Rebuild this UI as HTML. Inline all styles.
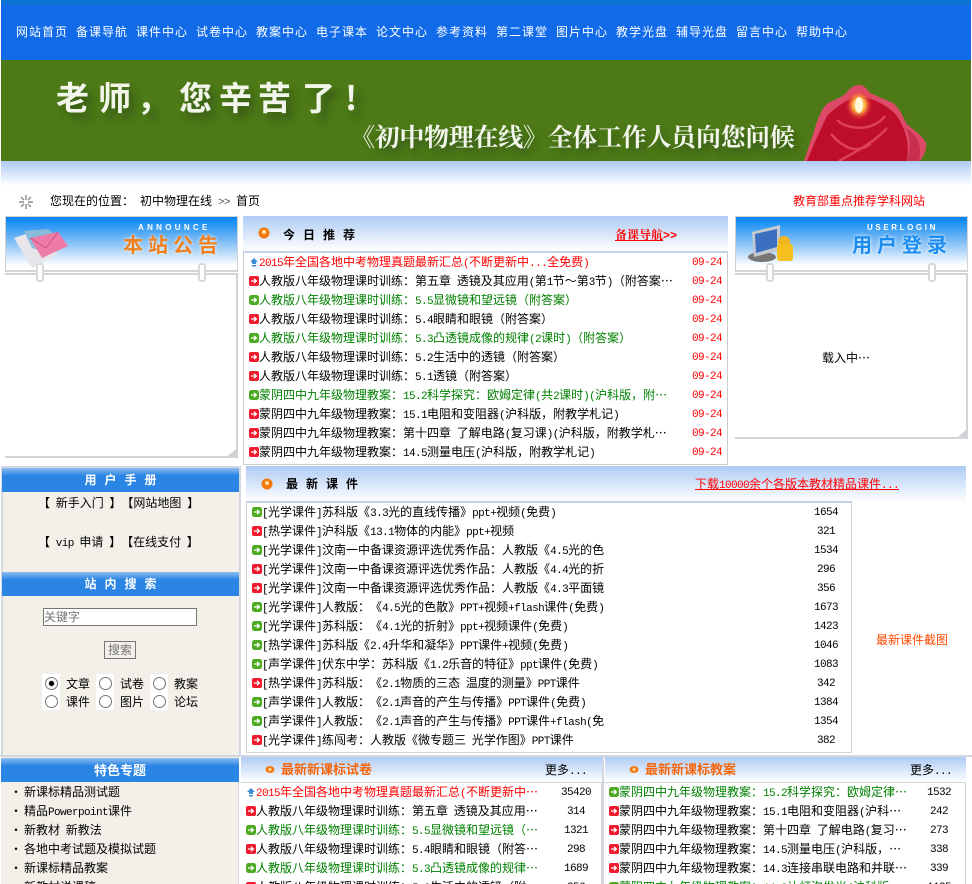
<!DOCTYPE html>
<html lang="zh"><head><meta charset="utf-8"><title>初中物理在线</title>
<style>
*{box-sizing:border-box}
html{margin:0;padding:0;background:#fff;overflow:hidden;width:972px;height:884px}
body{margin:0;padding:0;background:#fff;width:972px;height:884px;overflow:hidden;position:relative;font:12px/19px "WenQuanYi Zen Hei","Noto Sans CJK SC",sans-serif;word-spacing:3px;color:#000;text-spacing-trim:space-all}
tt{font:11px/1 "Liberation Mono",monospace;letter-spacing:-.6px;word-spacing:0}
.a{position:absolute;white-space:nowrap}
.nav{left:16px;top:22px;color:#fff;display:flex;letter-spacing:1px}
.nav span{display:block;width:60px}
.grad{background:linear-gradient(#aecbf4,#fff)}
.blue{background:linear-gradient(#8fbdf0 0,#2a85e4 32%,#2a85e4 100%);color:#fff;font-weight:bold;text-align:center;line-height:24px;height:24px}
.list{margin:0;padding:0;list-style:none}
.list li{height:19px;line-height:19px;white-space:nowrap;position:relative}
.list svg{width:10px;height:10px;display:inline-block;vertical-align:-1px;margin-right:0}
.g{color:#008000}.r{color:#f00}
.n{position:absolute;text-align:center;top:2px;width:60px;left:544px;color:#000;font:11px/19px "Liberation Mono",monospace;letter-spacing:-.6px}
.m{left:305px;width:50px}
.dt{position:absolute;left:443px;top:2px;color:#f00;font:11px/19px "Liberation Mono",monospace;letter-spacing:-.6px}
.hdbx{background:linear-gradient(#0284f3,#7cbcf5 45%,#fff 92%);border:1px solid #d4d4d4;border-bottom:2px solid #d4d4d4}
.ring{position:absolute;width:8px;height:19px;border:2px solid #d8d8d8;border-radius:3px;background:#fff}
.dot{position:absolute;width:13px;height:13px;border:1px solid #767676;border-radius:50%;background:#fff}
.ttl{font-weight:bold;letter-spacing:8px}
.fold{position:absolute;width:8px;height:7px;background:#cfcfd6;clip-path:polygon(100% 0,0 100%,100% 100%)}
.sm{color:#fff;font:bold 8px/9px "Liberation Sans",sans-serif;position:absolute;white-space:nowrap}
.bu{display:inline-block;width:14px}
</style></head><body>
<svg width="0" height="0" style="position:absolute"><defs>
<symbol id="ir" viewBox="0 0 10 10"><rect width="10" height="10" rx="2" fill="#ee1c2e"/><path d="M2 5h5M5 2.800 7.400 5 5 7.200" stroke="#fff" stroke-width="1.300" fill="none"/></symbol>
<symbol id="ig" viewBox="0 0 10 10"><rect width="10" height="10" rx="2.500" fill="#4dab23"/><path d="M2 5h5M5 2.800 7.400 5 5 7.200" stroke="#fff" stroke-width="1.300" fill="none"/></symbol>
<symbol id="iu" viewBox="0 0 10 10"><path d="M5 1 9 5H7V7H3V5H1ZM3 8H7V9.500H3Z" fill="#3e8ed8"/></symbol>
</defs></svg>

<div class="a" style="left:1px;top:0;width:970px;height:60px;background:#116be9"></div>
<div class="a" style="left:1px;top:0;width:970px;height:5px;background:#0d72d6"></div>
<div class="a nav"><span>网站首页</span><span>备课导航</span><span>课件中心</span><span>试卷中心</span><span>教案中心</span><span>电子课本</span><span>论文中心</span><span>参考资料</span><span>第二课堂</span><span>图片中心</span><span>教学光盘</span><span>辅导光盘</span><span>留言中心</span><span>帮助中心</span></div>

<svg class="a" style="left:1px;top:60px" width="970" height="101" viewBox="0 0 970 101">
<defs><filter id="b" x="-20%" y="-50%" width="140%" height="200%"><feGaussianBlur stdDeviation="4"/></filter><radialGradient id="fl"><stop offset="0" stop-color="#fff6c8"/><stop offset=".45" stop-color="#ffb040"/><stop offset="1" stop-color="#e01030" stop-opacity="0"/></radialGradient></defs>
<rect width="970" height="101" fill="#4d7a17"/>
<g font-family="'Noto Sans CJK SC',sans-serif" font-size="33" font-weight="bold" fill="#2e4f12" filter="url(#b)" opacity=".8"><text x="61 103 142 184 224 263 307 350" y="57">老师&#xFF0C;您辛苦了!</text></g>
<text x="55 97 136 178 218 257 301 344" y="50" font-family="'Noto Sans CJK SC',sans-serif" font-size="33" font-weight="bold" fill="#f2f6ea">老师&#xFF0C;您辛苦了!</text>
<g font-family="'Noto Serif CJK SC',serif" font-size="25" font-weight="bold"><text x="353" y="92" textLength="445" fill="#2e4f12" filter="url(#b)" opacity=".85">《初中物理在线》全体工作人员向您问候</text>
<text x="349" y="86" textLength="445" fill="#f4f6ee">《初中物理在线》全体工作人员向您问候</text></g>
<path d="M803 101C806 92 809 82 812 75 816 60 821 46 829 42 838 38 843 36 846 32 850 27 854 25 858 25 863 25 866 29 869 33 876 36 885 40 892 43 898 48 902 56 905 63 912 70 921 75 925 83 926 90 922 97 919 101Z" fill="#dd4a68"/>
<path d="M806 101C812 86 820 68 826 56 836 46 848 38 858 36 870 38 886 44 896 56 904 68 910 86 905 101Z" fill="#bf0d2c"/>
<path d="M905 101C910 90 910 78 905 68 914 74 922 82 918 101Z" fill="#c9304f"/>
<path d="M838 101C850 94 872 84 886 68M830 74C846 92 858 92 870 84M836 60C846 70 872 72 884 56" stroke="#de3f5a" stroke-width="2.500" fill="none"/>
<ellipse cx="858" cy="45" rx="14" ry="16" fill="url(#fl)"/><ellipse cx="858" cy="45" rx="4" ry="8" fill="#fff8d8"/>
</svg>
<div class="a grad" style="left:1px;top:161px;width:970px;height:25px"></div>

<svg class="a" style="left:18px;top:194px" width="16" height="16" viewBox="0 0 16 16"><path d="M8 1v5M8 10v5M1 8h5M10 8h5M3 3l3 3M10 10l3 3M13 3l-3 3M6 10l-3 3" stroke="#8a8a90" stroke-width="1.400"/></svg>
<div class="a" style="left:50px;top:191px">您现在的位置&#xFF1A;</div>
<div class="a" style="left:140px;top:191px">初中物理在线<tt style="color:#555"> &gt;&gt; </tt>首页</div>
<div class="a r" style="left:793px;top:191px">教育部重点推荐学科网站</div>

<!-- announce box -->
<div class="a hdbx" style="left:5px;top:216px;width:233px;height:56px"></div>
<svg class="a" style="left:12px;top:226px" width="58" height="42" viewBox="0 0 58 42"><path d="M2 12 22 5 46 28 20 42Z" fill="#e6e6ea"/><path d="M12 5 36 3 54 18 34 26 20 22Z" fill="#88bbdc"/><path d="M18 12 46 6 56 20 30 32Z" fill="#ee7aa8"/><path d="M18 12 34 22 46 6" stroke="#c84f85" fill="none"/></svg>
<div class="sm" style="left:138px;top:223px;letter-spacing:3.300px">ANNOUNCE</div>
<div class="a" style="left:123px;top:232px;color:#ee8020;font-size:20px;font-weight:bold;line-height:24px;letter-spacing:5px;text-shadow:0 0 3px #fff">本站公告</div>
<div class="a" style="left:5px;top:273px;width:233px;height:185px;border-top:2px solid #d4d4d4;border-right:2px solid #d4d4d4;border-bottom:2px solid #d4d4dc"></div>
<div class="fold" style="left:228px;top:449px"></div>
<div class="ring" style="left:36px;top:263px"></div><div class="ring" style="left:198px;top:263px"></div>

<!-- today -->
<div class="a grad" style="left:243px;top:216px;width:485px;height:35px"></div>
<svg class="a" style="left:258px;top:227px" width="12" height="12"><circle cx="6" cy="6" r="5.500" fill="#f47a10"/><circle cx="6" cy="5" r="2" fill="#ffe0a0"/></svg>
<div class="a ttl" style="left:283px;top:225px">今日推荐</div>
<div class="a" style="left:615px;top:225px;color:#f00;font-weight:bold;font-family:'Noto Serif CJK SC',serif"><u>备课导航</u><span style="font:bold 12px 'Liberation Sans',sans-serif">&gt;&gt;</span></div>
<div class="a" style="left:243px;top:251px;width:485px;height:214px;border:1px solid #ccc;border-top:2px solid #c3d4ea"></div>
<ul class="a list" style="left:249px;top:252px;width:475px">
<li class="r"><svg><use href="#iu"/></svg><tt>2015</tt>年全国各地中考物理真题最新汇总<tt>(</tt>不断更新中<tt>...</tt>全免费<tt>)</tt><span class="dt">09-24</span></li>
<li><svg><use href="#ir"/></svg>人教版八年级物理课时训练&#xFF1A;第五章 透镜及其应用<tt>(</tt>第<tt>1</tt>节&#xFF5E;第<tt>3</tt>节<tt>)</tt>&#xFF08;附答案…<span class="dt">09-24</span></li>
<li class="g"><svg><use href="#ig"/></svg>人教版八年级物理课时训练&#xFF1A;<tt>5.5</tt>显微镜和望远镜&#xFF08;附答案&#xFF09;<span class="dt">09-24</span></li>
<li><svg><use href="#ir"/></svg>人教版八年级物理课时训练&#xFF1A;<tt>5.4</tt>眼睛和眼镜&#xFF08;附答案&#xFF09;<span class="dt">09-24</span></li>
<li class="g"><svg><use href="#ig"/></svg>人教版八年级物理课时训练&#xFF1A;<tt>5.3</tt>凸透镜成像的规律<tt>(2</tt>课时<tt>)</tt>&#xFF08;附答案&#xFF09;<span class="dt">09-24</span></li>
<li><svg><use href="#ir"/></svg>人教版八年级物理课时训练&#xFF1A;<tt>5.2</tt>生活中的透镜&#xFF08;附答案&#xFF09;<span class="dt">09-24</span></li>
<li><svg><use href="#ir"/></svg>人教版八年级物理课时训练&#xFF1A;<tt>5.1</tt>透镜&#xFF08;附答案&#xFF09;<span class="dt">09-24</span></li>
<li class="g"><svg><use href="#ig"/></svg>蒙阴四中九年级物理教案&#xFF1A;<tt>15.2</tt>科学探究&#xFF1A;欧姆定律<tt>(</tt>共<tt>2</tt>课时<tt>)(</tt>沪科版&#xFF0C;附…<span class="dt">09-24</span></li>
<li><svg><use href="#ir"/></svg>蒙阴四中九年级物理教案&#xFF1A;<tt>15.1</tt>电阻和变阻器<tt>(</tt>沪科版&#xFF0C;附教学札记<tt>)</tt><span class="dt">09-24</span></li>
<li><svg><use href="#ir"/></svg>蒙阴四中九年级物理教案&#xFF1A;第十四章 了解电路<tt>(</tt>复习课<tt>)(</tt>沪科版&#xFF0C;附教学札…<span class="dt">09-24</span></li>
<li><svg><use href="#ir"/></svg>蒙阴四中九年级物理教案&#xFF1A;<tt>14.5</tt>测量电压<tt>(</tt>沪科版&#xFF0C;附教学札记<tt>)</tt><span class="dt">09-24</span></li>
</ul>

<!-- login box -->
<div class="a hdbx" style="left:735px;top:216px;width:233px;height:56px"></div>
<svg class="a" style="left:748px;top:224px" width="48" height="44" viewBox="0 0 48 44"><ellipse cx="14" cy="33" rx="14" ry="5" fill="#777"/><path d="M4 8 32 1V26L6 33Z" fill="#c5c9cf"/><path d="M7 10 29 5V23L8 29Z" fill="#3b6fc0"/><circle cx="36" cy="18" r="6" fill="#f4b61e"/><rect x="29" y="20" width="16" height="17" rx="3" fill="#f7bf1e"/></svg>
<div class="sm" style="left:867px;top:223px;letter-spacing:2.600px">USERLOGIN</div>
<div class="a" style="left:852px;top:232px;color:#1a8cf0;font-size:20px;font-weight:bold;line-height:24px;letter-spacing:5px;text-shadow:0 0 3px #fff">用户登录</div>
<div class="a" style="left:735px;top:273px;width:233px;height:166px;border-top:2px solid #d4d4d4;border-right:2px solid #d4d4d4;border-bottom:2px solid #d4d4dc"></div>
<div class="fold" style="left:958px;top:430px"></div>
<div class="ring" style="left:766px;top:263px"></div><div class="ring" style="left:928px;top:263px"></div>
<div class="a" style="left:822px;top:348px">载入中…</div>

<!-- left column -->
<div class="a" style="left:1px;top:466px;width:240px;height:291px;background:#f3f0e9;border:2px solid #d4d7df;border-bottom:0"></div>
<div class="a blue ttl" style="left:2px;top:468px;width:237px;padding-left:8px">用户手册</div>
<div class="a" style="left:38px;top:493px">【 新手入门 】【网站地图 】</div>
<div class="a" style="left:38px;top:532px">【 <tt>vip</tt> 申请 】【在线支付 】</div>
<div class="a blue ttl" style="left:2px;top:572px;width:237px;padding-left:8px">站内搜索</div>
<div class="a" style="left:43px;top:608px;width:154px;height:18px;background:#fff;border:1px solid #767676;color:#757575;line-height:16px">关键字</div>
<div class="a" style="left:104px;top:641px;width:32px;height:18px;background:#f3f0e9;border:1px solid #767676;color:#757575;line-height:16px;text-align:center">搜索</div>
<div class="a" style="left:42px;top:674px;width:18px;height:36px;background:#fff"></div>
<div class="a" style="left:96px;top:674px;width:18px;height:36px;background:#fff"></div>
<div class="a" style="left:150px;top:674px;width:18px;height:36px;background:#fff"></div>
<div class="dot" style="left:45px;top:677px"></div><div class="a" style="left:49px;top:681px;width:5px;height:5px;border-radius:50%;background:#000;box-shadow:0 0 1px #000"></div>
<div class="dot" style="left:99px;top:677px"></div><div class="dot" style="left:153px;top:677px"></div>
<div class="dot" style="left:45px;top:695px"></div><div class="dot" style="left:99px;top:695px"></div><div class="dot" style="left:153px;top:695px"></div>
<div class="a" style="left:66px;top:674px">文章</div><div class="a" style="left:120px;top:674px">试卷</div><div class="a" style="left:174px;top:674px">教案</div>
<div class="a" style="left:66px;top:692px">课件</div><div class="a" style="left:120px;top:692px">图片</div><div class="a" style="left:174px;top:692px">论坛</div>

<!-- newest -->
<div class="a grad" style="left:246px;top:466px;width:720px;height:36px"></div>
<svg class="a" style="left:261px;top:478px" width="12" height="12"><circle cx="6" cy="6" r="5.500" fill="#f47a10"/><circle cx="6" cy="5" r="2" fill="#ffe0a0"/></svg>
<div class="a ttl" style="left:286px;top:474px">最新课件</div>
<div class="a r" style="left:695px;top:474px"><u>下载<tt>10000</tt>余个各版本教材精品课件<tt>...</tt></u></div>
<div class="a" style="left:246px;top:501px;width:606px;height:252px;border:1px solid #d4d4d4;border-top:2px solid #c3d4ea"></div>
<ul class="a list" style="left:252px;top:502px;width:596px">
<li><svg><use href="#ig"/></svg><tt>[</tt>光学课件<tt>]</tt>苏科版《<tt>3.3</tt>光的直线传播》<tt>ppt+</tt>视频<tt>(</tt>免费<tt>)</tt><span class="n">1654</span></li>
<li><svg><use href="#ir"/></svg><tt>[</tt>热学课件<tt>]</tt>沪科版《<tt>13.1</tt>物体的内能》<tt>ppt+</tt>视频<span class="n">321</span></li>
<li><svg><use href="#ig"/></svg><tt>[</tt>光学课件<tt>]</tt>汶南一中备课资源评选优秀作品&#xFF1A;人教版《<tt>4.5</tt>光的色<span class="n">1534</span></li>
<li><svg><use href="#ir"/></svg><tt>[</tt>光学课件<tt>]</tt>汶南一中备课资源评选优秀作品&#xFF1A;人教版《<tt>4.4</tt>光的折<span class="n">296</span></li>
<li><svg><use href="#ir"/></svg><tt>[</tt>光学课件<tt>]</tt>汶南一中备课资源评选优秀作品&#xFF1A;人教版《<tt>4.3</tt>平面镜<span class="n">356</span></li>
<li><svg><use href="#ig"/></svg><tt>[</tt>光学课件<tt>]</tt>人教版&#xFF1A;《<tt>4.5</tt>光的色散》<tt>PPT+</tt>视频<tt>+flash</tt>课件<tt>(</tt>免费<tt>)</tt><span class="n">1673</span></li>
<li><svg><use href="#ig"/></svg><tt>[</tt>光学课件<tt>]</tt>苏科版&#xFF1A;《<tt>4.1</tt>光的折射》<tt>ppt+</tt>视频课件<tt>(</tt>免费<tt>)</tt><span class="n">1423</span></li>
<li><svg><use href="#ig"/></svg><tt>[</tt>热学课件<tt>]</tt>苏科版《<tt>2.4</tt>升华和凝华》<tt>PPT</tt>课件<tt>+</tt>视频<tt>(</tt>免费<tt>)</tt><span class="n">1046</span></li>
<li><svg><use href="#ig"/></svg><tt>[</tt>声学课件<tt>]</tt>伏东中学&#xFF1A;苏科版《<tt>1.2</tt>乐音的特征》<tt>ppt</tt>课件<tt>(</tt>免费<tt>)</tt><span class="n">1083</span></li>
<li><svg><use href="#ir"/></svg><tt>[</tt>热学课件<tt>]</tt>苏科版&#xFF1A;《<tt>2.1</tt>物质的三态 温度的测量》<tt>PPT</tt>课件<span class="n">342</span></li>
<li><svg><use href="#ig"/></svg><tt>[</tt>声学课件<tt>]</tt>人教版&#xFF1A;《<tt>2.1</tt>声音的产生与传播》<tt>PPT</tt>课件<tt>(</tt>免费<tt>)</tt><span class="n">1384</span></li>
<li><svg><use href="#ig"/></svg><tt>[</tt>声学课件<tt>]</tt>人教版&#xFF1A;《<tt>2.1</tt>声音的产生与传播》<tt>PPT</tt>课件<tt>+flash(</tt>免<span class="n">1354</span></li>
<li><svg><use href="#ir"/></svg><tt>[</tt>光学课件<tt>]</tt>练闯考&#xFF1A;人教版《微专题三 光学作图》<tt>PPT</tt>课件<span class="n">382</span></li>
</ul>
<div class="a" style="left:876px;top:630px;color:#ff4a00">最新课件截图</div>

<!-- bottom row -->
<div class="a" style="left:0;top:755px;width:972px;height:2px;background:#d4d7df"></div>
<div class="a" style="left:1px;top:757px;width:238px;height:127px;background:#f3f0e9;border-right:1px solid #d4d7df"></div>
<div class="a blue" style="left:1px;top:758px;width:238px;height:24px;font-size:13px">特色专题</div>
<ul class="a list" style="left:10px;top:782px">
<li><span class="bu">·</span>新课标精品测试题</li><li><span class="bu">·</span>精品<tt>Powerpoint</tt>课件</li><li><span class="bu">·</span>新教材 新教法</li><li><span class="bu">·</span>各地中考试题及模拟试题</li><li><span class="bu">·</span>新课标精品教案</li><li><span class="bu">·</span>新教材说课稿</li>
</ul>

<div class="a grad" style="left:241px;top:757px;width:361px;height:25px"></div>
<svg class="a" style="left:265px;top:765px" width="10" height="9"><ellipse cx="5" cy="4.500" rx="4.500" ry="3.500" fill="#f47a10"/><circle cx="5" cy="4.500" r="1.500" fill="#ffe0a0"/></svg>
<div class="a" style="left:281px;top:759px;color:#f4660c;font-weight:bold;font-size:13px">最新新课标试卷</div>
<div class="a" style="left:545px;top:760px">更多<tt>...</tt></div>
<div class="a" style="left:240px;top:782px;width:362px;height:102px;border-top:1px solid #d4d4d4;border-right:1px solid #d4d4d4"></div>
<ul class="a list" style="left:246px;top:782px;width:350px">
<li class="r"><svg><use href="#iu"/></svg><tt>2015</tt>年全国各地中考物理真题最新汇总<tt>(</tt>不断更新中…<span class="n m">35420</span></li>
<li><svg><use href="#ir"/></svg>人教版八年级物理课时训练&#xFF1A;第五章 透镜及其应用…<span class="n m">314</span></li>
<li class="g"><svg><use href="#ig"/></svg>人教版八年级物理课时训练&#xFF1A;<tt>5.5</tt>显微镜和望远镜&#xFF08;…<span class="n m">1321</span></li>
<li><svg><use href="#ir"/></svg>人教版八年级物理课时训练&#xFF1A;<tt>5.4</tt>眼睛和眼镜&#xFF08;附答…<span class="n m">298</span></li>
<li class="g"><svg><use href="#ig"/></svg>人教版八年级物理课时训练&#xFF1A;<tt>5.3</tt>凸透镜成像的规律…<span class="n m">1689</span></li>
<li><svg><use href="#ir"/></svg>人教版八年级物理课时训练&#xFF1A;<tt>5.2</tt>生活中的透镜&#xFF08;附…<span class="n m">356</span></li>
</ul>

<div class="a" style="left:602px;top:757px;width:2px;height:127px;background:#d4d7df"></div>
<div class="a grad" style="left:605px;top:757px;width:361px;height:25px"></div>
<svg class="a" style="left:629px;top:765px" width="10" height="9"><ellipse cx="5" cy="4.500" rx="4.500" ry="3.500" fill="#f47a10"/><circle cx="5" cy="4.500" r="1.500" fill="#ffe0a0"/></svg>
<div class="a" style="left:645px;top:759px;color:#f4660c;font-weight:bold;font-size:13px">最新新课标教案</div>
<div class="a" style="left:910px;top:760px">更多<tt>...</tt></div>
<div class="a" style="left:604px;top:782px;width:362px;height:102px;border-top:1px solid #d4d4d4;border-right:1px solid #d4d4d4"></div>
<ul class="a list" style="left:609px;top:782px;width:350px">
<li class="g"><svg><use href="#ig"/></svg>蒙阴四中九年级物理教案&#xFF1A;<tt>15.2</tt>科学探究&#xFF1A;欧姆定律…<span class="n m">1532</span></li>
<li><svg><use href="#ir"/></svg>蒙阴四中九年级物理教案&#xFF1A;<tt>15.1</tt>电阻和变阻器<tt>(</tt>沪科…<span class="n m">242</span></li>
<li><svg><use href="#ir"/></svg>蒙阴四中九年级物理教案&#xFF1A;第十四章 了解电路<tt>(</tt>复习…<span class="n m">273</span></li>
<li><svg><use href="#ir"/></svg>蒙阴四中九年级物理教案&#xFF1A;<tt>14.5</tt>测量电压<tt>(</tt>沪科版&#xFF0C;…<span class="n m">338</span></li>
<li><svg><use href="#ir"/></svg>蒙阴四中九年级物理教案&#xFF1A;<tt>14.3</tt>连接串联电路和并联…<span class="n m">339</span></li>
<li class="g"><svg><use href="#ig"/></svg>蒙阴四中九年级物理教案&#xFF1A;<tt>14.2</tt>让灯泡发光<tt>(</tt>沪科版…<span class="n m">1135</span></li>
</ul>
</body></html>
